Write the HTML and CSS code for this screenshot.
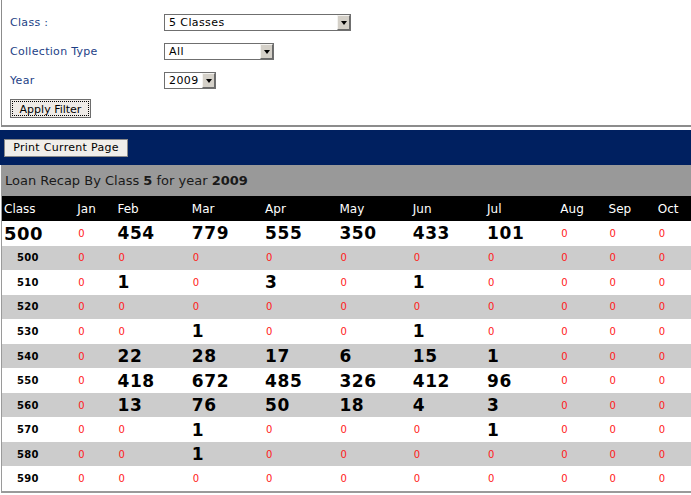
FILE: index.html
```html
<!DOCTYPE html>
<html>
<head>
<meta charset="utf-8">
<link rel="stylesheet" href="styles.css">
</head>
<body>
<div class="filter">
  <div class="filter-grid">
    <div class="label">Class :</div>
    <div class="select w-class"><span class="val">5 Classes</span><span class="arrow"></span></div>
    <div class="label">Collection Type</div>
    <div class="select w-coll"><span class="val">All</span><span class="arrow"></span></div>
    <div class="label">Year</div>
    <div class="select w-year"><span class="val">2009</span><span class="arrow"></span></div>
  </div>
  <button class="btn apply"><span class="focus">Apply Filter</span></button>
</div>
<div class="toolbar">
  <button class="btn print">Print Current Page</button>
</div>
<div class="report">
  <div class="title">Loan Recap By Class <b>5</b> for year <b>2009</b></div>
  <table class="recap">
    <colgroup>
      <col class="c-class"><col class="c-jan"><col class="c-m"><col class="c-m2"><col class="c-m"><col class="c-m2"><col class="c-m"><col class="c-m2"><col class="c-aug"><col class="c-sep"><col class="c-oct">
    </colgroup>
    <thead>
      <tr><th>Class</th><th>Jan</th><th>Feb</th><th>Mar</th><th>Apr</th><th>May</th><th>Jun</th><th>Jul</th><th>Aug</th><th>Sep</th><th>Oct</th></tr>
    </thead>
    <tbody>
      <tr class="total"><td class="cls">500</td><td class="z">0</td><td class="n">454</td><td class="n">779</td><td class="n">555</td><td class="n">350</td><td class="n">433</td><td class="n">101</td><td class="z">0</td><td class="z">0</td><td class="z">0</td></tr>
      <tr class="alt"><td class="sub">500</td><td class="z">0</td><td class="z">0</td><td class="z">0</td><td class="z">0</td><td class="z">0</td><td class="z">0</td><td class="z">0</td><td class="z">0</td><td class="z">0</td><td class="z">0</td></tr>
      <tr><td class="sub">510</td><td class="z">0</td><td class="n">1</td><td class="z">0</td><td class="n">3</td><td class="z">0</td><td class="n">1</td><td class="z">0</td><td class="z">0</td><td class="z">0</td><td class="z">0</td></tr>
      <tr class="alt"><td class="sub">520</td><td class="z">0</td><td class="z">0</td><td class="z">0</td><td class="z">0</td><td class="z">0</td><td class="z">0</td><td class="z">0</td><td class="z">0</td><td class="z">0</td><td class="z">0</td></tr>
      <tr><td class="sub">530</td><td class="z">0</td><td class="z">0</td><td class="n">1</td><td class="z">0</td><td class="z">0</td><td class="n">1</td><td class="z">0</td><td class="z">0</td><td class="z">0</td><td class="z">0</td></tr>
      <tr class="alt"><td class="sub">540</td><td class="z">0</td><td class="n">22</td><td class="n">28</td><td class="n">17</td><td class="n">6</td><td class="n">15</td><td class="n">1</td><td class="z">0</td><td class="z">0</td><td class="z">0</td></tr>
      <tr><td class="sub">550</td><td class="z">0</td><td class="n">418</td><td class="n">672</td><td class="n">485</td><td class="n">326</td><td class="n">412</td><td class="n">96</td><td class="z">0</td><td class="z">0</td><td class="z">0</td></tr>
      <tr class="alt"><td class="sub">560</td><td class="z">0</td><td class="n">13</td><td class="n">76</td><td class="n">50</td><td class="n">18</td><td class="n">4</td><td class="n">3</td><td class="z">0</td><td class="z">0</td><td class="z">0</td></tr>
      <tr><td class="sub">570</td><td class="z">0</td><td class="z">0</td><td class="n">1</td><td class="z">0</td><td class="z">0</td><td class="z">0</td><td class="n">1</td><td class="z">0</td><td class="z">0</td><td class="z">0</td></tr>
      <tr class="alt"><td class="sub">580</td><td class="z">0</td><td class="z">0</td><td class="n">1</td><td class="z">0</td><td class="z">0</td><td class="z">0</td><td class="z">0</td><td class="z">0</td><td class="z">0</td><td class="z">0</td></tr>
      <tr><td class="sub">590</td><td class="z">0</td><td class="z">0</td><td class="z">0</td><td class="z">0</td><td class="z">0</td><td class="z">0</td><td class="z">0</td><td class="z">0</td><td class="z">0</td><td class="z">0</td></tr>
    </tbody>
  </table>
</div>
</body>
</html>
```
FILE: styles.css
```css
html, body {
  margin: 0;
  padding: 0;
  background: #fff;
  overflow: hidden;
}
body {
  font-family: "DejaVu Sans", Verdana, sans-serif;
  font-size: 11px;
  color: #000;
  width: 691px;
}
.filter {
  margin-left: 1px;
  border-left: 1px solid #8c8c8c;
  border-bottom: 2px solid #8c8c8c;
  padding: 14px 0 0 8px;
  box-sizing: border-box;
  height: 127px;
}
.filter-grid {
  display: grid;
  grid-template-columns: 154px auto;
  row-gap: 12px;
  align-items: center;
}
.label {
  color: #1d3f86;
  font-size: 11px;
  line-height: 17px;
  letter-spacing: 0.3px;
}
.select {
  display: flex;
  align-items: stretch;
  height: 17px;
  box-sizing: border-box;
  border: 1px solid #6f6f6f;
  background: #fff;
  justify-self: start;
}
.w-class { width: 187px; }
.w-coll { width: 110px; }
.w-year { width: 52px; }
.select .val {
  flex: 1;
  padding-left: 4px;
  line-height: 15px;
  font-size: 11px;
  letter-spacing: 0.4px;
  white-space: nowrap;
}
.select .arrow {
  width: 13px;
  box-sizing: border-box;
  background: #d4d0c8;
  border-top: 1px solid #f4f3f0;
  border-left: 1px solid #f4f3f0;
  border-right: 1px solid #6a6a6a;
  border-bottom: 1px solid #6a6a6a;
  display: flex;
  align-items: center;
  justify-content: center;
}
.select .arrow::after {
  content: "";
  border-left: 3px solid transparent;
  border-right: 3px solid transparent;
  border-top: 4px solid #000;
}
.btn {
  font-family: "DejaVu Sans", Verdana, sans-serif;
  font-size: 11px;
  color: #000;
  background: #efebe7;
  border: 1px solid #6d6d6d;
  padding: 0;
  margin: 0;
  display: block;
}
.apply {
  margin-top: 10px;
  width: 81px;
  height: 19px;
  padding: 1px;
}
.apply .focus {
  display: block;
  height: 100%;
  box-sizing: border-box;
  border: 1px dotted #000;
  line-height: 15px;
}
.toolbar {
  margin-top: 3px;
  background: #002060;
  height: 35px;
  padding: 9px 0 0 4px;
  box-sizing: border-box;
}
.print {
  width: 124px;
  height: 18px;
  background: #f0eeea;
  border: 1px solid #8a8a8a;
  line-height: 16px;
  letter-spacing: 0.3px;
}
.report {
  margin-left: 1px;
  border-left: 1px solid #9a9a9a;
  border-bottom: 2px solid #9a9a9a;
  width: 700px;
}
.title {
  background: #999999;
  height: 31px;
  line-height: 31px;
  font-size: 13px;
  color: #1a1a1a;
  padding-left: 3px;
}
.title b { font-weight: bold; }
.recap {
  border-collapse: collapse;
  table-layout: fixed;
  width: 700px;
}
.c-class { width: 73px; }
.c-jan { width: 40px; }
.c-m { width: 74px; }
.c-m2 { width: 73px; }
.c-aug { width: 48px; }
.c-sep { width: 49px; }
.c-oct { width: 46px; }
.recap th {
  background: #000;
  color: #fff;
  font-weight: normal;
  font-size: 12px;
  text-align: left;
  height: 25px;
  padding: 0 0 0 2px;
  white-space: nowrap;
}
.recap th:first-child { padding-left: 2px; }
.recap td {
  height: 24.55px;
  padding: 0 0 0 2px;
  text-align: left;
  white-space: nowrap;
}
.recap tr.alt td { background: #cccccc; }
.recap td.cls {
  font-size: 18px;
  font-weight: bold;
  padding-left: 2px;
  letter-spacing: 0.5px;
}
.recap td.sub {
  font-size: 10px;
  font-weight: bold;
  padding-left: 15px;
  letter-spacing: 0.3px;
}
.recap td.n {
  font-size: 17px;
  font-weight: bold;
  letter-spacing: 0.6px;
}
.recap td.z {
  color: #ff1a1a;
  font-size: 10px;
  padding-left: 3px;
}
```
